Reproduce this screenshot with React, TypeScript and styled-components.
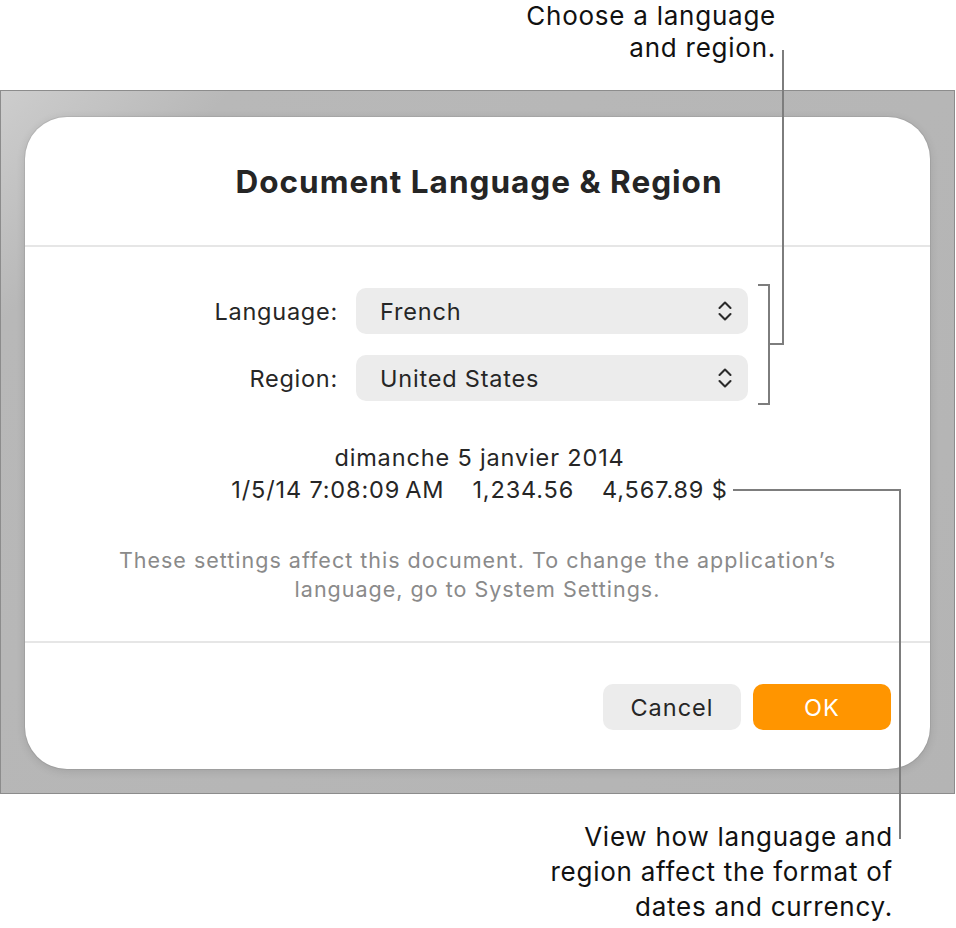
import styled, { createGlobalStyle } from 'styled-components'

const GlobalStyle = createGlobalStyle`
  html, body {
    margin: 0;
    padding: 0;
    background: #ffffff;
  }

  body {
    font-family: Inter, 'Noto Sans', 'Liberation Sans', sans-serif;
    color: #1d1d1f;
    -webkit-font-smoothing: antialiased;
  }
`

const Chevrons = () => (
  <svg width="16" height="22" viewBox="0 0 16 22" fill="none">
    <path
      d="M2.5 8 L8 2.5 L13.5 8 M2.5 14 L8 19.5 L13.5 14"
      stroke="#2b2b2b"
      strokeWidth="2.1"
      strokeLinecap="round"
      strokeLinejoin="round"
    />
  </svg>
)

const LeaderLines = () => (
  <S.Lines width="956" height="928" viewBox="0 0 956 928">
    <g stroke="#7d7d7d" strokeWidth="2" fill="none">
      <path d="M783 50 V344 H769" />
      <path d="M758 285 H769 V404 H758" />
      <path d="M733 490 H900 V839" />
    </g>
  </S.Lines>
)

const PopUp = ({ value }: { value: string }) => (
  <S.Select>
    <span>{value}</span>
    <Chevrons />
  </S.Select>
)

export default function App() {
  return (
    <>
      <GlobalStyle />
      <S.Page>
        <S.TopCallout>
          Choose a language
          <br />
          and region.
        </S.TopCallout>

        <S.Frame>
          <S.Dialog>
            <S.Header>
              <S.Title>Document Language &amp; Region</S.Title>
            </S.Header>

            <S.Body>
              <S.Form>
                <S.Label>Language:</S.Label>
                <PopUp value="French" />
                <S.Label>Region:</S.Label>
                <PopUp value="United States" />
              </S.Form>

              <S.Sample>
                <div>dimanche 5 janvier 2014</div>
                <S.SampleRow>
                  <span>1/5/14 7:08:09&#8239;AM</span>
                  <span>1,234.56</span>
                  <span>4,567.89 $</span>
                </S.SampleRow>
              </S.Sample>

              <S.Note>
                These settings affect this document. To change the application’s
                <br />
                language, go to System Settings.
              </S.Note>
            </S.Body>

            <S.Footer>
              <S.Button>Cancel</S.Button>
              <S.Button $primary>OK</S.Button>
            </S.Footer>
          </S.Dialog>
        </S.Frame>

        <S.BottomCallout>
          View how language and
          <br />
          region affect the format of
          <br />
          dates and currency.
        </S.BottomCallout>

        <LeaderLines />
      </S.Page>
    </>
  )
}

const S = {
  Page: styled.div`
    position: relative;
    width: 956px;
    height: 928px;
    overflow: hidden;
  `,

  Lines: styled.svg`
    position: absolute;
    inset: 0;
    pointer-events: none;
  `,

  TopCallout: styled.div`
    height: 90px;
    box-sizing: border-box;
    padding-right: 180px;
    text-align: right;
    font-size: 26px;
    letter-spacing: 0.75px;
    line-height: 32px;
    color: #111111;
  `,

  Frame: styled.div`
    width: 955px;
    box-sizing: border-box;
    border: 1px solid #8c8c8c;
    padding: 26px 24px 24px;
    background: linear-gradient(135deg, #cdcdcd 0%, #b8b8b8 14%, #b4b4b4 100%);
  `,

  Dialog: styled.div`
    height: 652px;
    display: flex;
    flex-direction: column;
    background: #ffffff;
    border-radius: 42px;
    box-shadow: 0 0 0 1px rgba(0, 0, 0, 0.06), 0 2px 10px rgba(0, 0, 0, 0.12);
    overflow: hidden;
  `,

  Header: styled.div`
    height: 128px;
    flex-shrink: 0;
    display: flex;
    align-items: center;
    justify-content: center;
    border-bottom: 2px solid #e6e6e6;
  `,

  Title: styled.h1`
    margin: 0 0 0 3px;
    font-size: 31.5px;
    font-weight: 700;
    color: #252525;
    letter-spacing: 1px;
  `,

  Body: styled.div`
    flex: 1;
    padding-top: 41px;
    border-bottom: 2px solid #e6e6e6;
  `,

  Form: styled.div`
    display: grid;
    grid-template-columns: 331px 392px;
    grid-auto-rows: 46px;
    row-gap: 21px;
    align-items: center;
  `,

  Label: styled.div`
    padding-right: 18px;
    text-align: right;
    font-size: 23.5px;
    letter-spacing: 0.75px;
    color: #262626;
  `,

  Select: styled.div`
    height: 46px;
    display: flex;
    align-items: center;
    justify-content: space-between;
    padding: 0 15px 0 24px;
    border-radius: 10px;
    background: #ececec;
    font-size: 23.5px;
    letter-spacing: 0.8px;
    color: #262626;
  `,

  Sample: styled.div`
    margin-top: 41px;
    margin-left: 4px;
    text-align: center;
    font-size: 23.5px;
    letter-spacing: 0.85px;
    line-height: 32px;
    color: #262626;
  `,

  SampleRow: styled.div`
    display: flex;
    justify-content: center;
    gap: 28px;
  `,

  Note: styled.div`
    margin-top: 40px;
    text-align: center;
    font-size: 21.5px;
    letter-spacing: 1px;
    line-height: 29px;
    color: #8a8a8a;
  `,

  Footer: styled.div`
    height: 126px;
    flex-shrink: 0;
    display: flex;
    justify-content: flex-end;
    align-items: flex-start;
    gap: 12px;
    padding: 41px 39px 0 0;
    box-sizing: border-box;
  `,

  Button: styled.button<{ $primary?: boolean }>`
    width: 138px;
    height: 46px;
    border: none;
    border-radius: 10px;
    font-family: inherit;
    font-size: 23.5px;
    letter-spacing: 1px;
    background: ${p => (p.$primary ? '#ff9500' : '#ececec')};
    color: ${p => (p.$primary ? '#ffffff' : '#262626')};
  `,

  BottomCallout: styled.div`
    padding-top: 25px;
    padding-right: 63px;
    text-align: right;
    font-size: 26px;
    letter-spacing: 0.75px;
    line-height: 35px;
    color: #111111;
  `,
}
